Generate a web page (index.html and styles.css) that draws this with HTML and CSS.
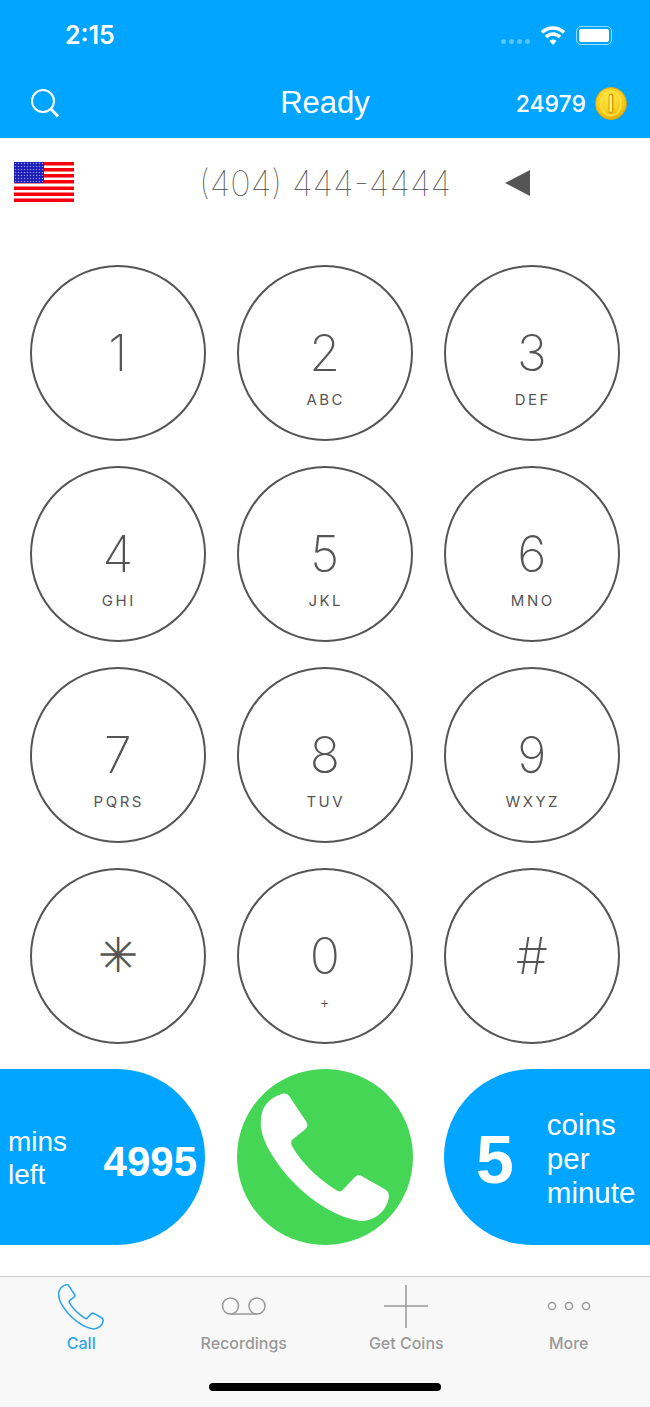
FILE: index.html
```html
<!DOCTYPE html>
<html lang="en">
<head>
    <meta charset="UTF-8">
    <meta name="viewport" content="width=device-width, initial-scale=1.0">
    <title>Dialer</title>
    <link rel="stylesheet" href="styles.css">
</head>
<body>
    <svg class="defs" width="0" height="0">
        <defs>
            <symbol id="handset" viewBox="26 24 138 138">
                <path d="M53 28.5C56 28 58 29 59.5 31.5L76.5 57C78 59.500 77.800 61.800 75.500 64L62.500 74.500C60.700 76.300 60.700 79 62.500 82C72 98 88 114 107 125.500C109.500 127 111.500 126.500 113 124.500L125 112C127 110 129.500 109.800 132 111.200L154.500 124C158.500 126.500 159.500 129 158.500 134C156 146 145 156 131 156C99 152 60 122 39 85C32 72 30 62 31 54C32 42 38 33 53 28.500Z"/>
            </symbol>
            <pattern id="stars" width="3" height="3" patternUnits="userSpaceOnUse">
                <circle cx="1.500" cy="1.500" r="0.800" fill="#8f8fe8"/>
            </pattern>
            <radialGradient id="gold" cx="45%" cy="35%" r="70%">
                <stop offset="0" stop-color="#ffe94a"/>
                <stop offset="0.7" stop-color="#f7c812"/>
                <stop offset="1" stop-color="#e0a308"/>
            </radialGradient>
        </defs>
    </svg>

    <header class="top">
        <div class="status-bar">
            <span class="time">2:15</span>
            <div class="status-icons">
                <span class="signal"><i></i><i></i><i></i><i></i></span>
                <svg class="wifi" width="26" height="21" viewBox="0 0 26 21">
                    <path d="M2 7.500C8 1.500 18 1.500 24 7.500" />
                    <path d="M6 12C10 8 16 8 20 12" />
                    <path d="M13 20L9.500 16C11.500 14 14.500 14 16.500 16Z" class="wifi-dot"/>
                </svg>
                <span class="battery"><span class="battery-fill"></span></span>
            </div>
        </div>
        <nav class="nav">
            <svg class="search" width="28" height="29" viewBox="0 0 28 29">
                <circle cx="12" cy="12" r="11"/>
                <path class="search-handle" d="M20 20L27 27.500"/>
            </svg>
            <span class="nav-title">Ready</span>
            <div class="coins">
                <span class="coins-count">24979</span>
                <svg class="coin" width="32" height="33" viewBox="0 0 32 33">
                    <ellipse cx="16" cy="16.500" rx="15.500" ry="16" fill="url(#gold)" stroke="#e2a90c"/>
                    <ellipse cx="16" cy="16.500" rx="10" ry="12" fill="none" stroke="#fbe14a" stroke-width="1.500"/>
                    <rect x="13.500" y="6.500" width="5" height="20" rx="2.500" fill="#d99d05"/>
                    <rect x="14.500" y="8" width="2.500" height="17" rx="1.200" fill="#fff07a"/>
                </svg>
            </div>
        </nav>
    </header>

    <section class="number-row">
        <svg class="flag" width="60" height="40" viewBox="0 0 60 40">
            <rect width="60" height="40" fill="#fff"/>
            <g fill="#f5000d">
                <rect y="0" width="60" height="3.500"/>
                <rect y="6" width="60" height="3.500"/>
                <rect y="12" width="60" height="3.500"/>
                <rect y="18" width="60" height="3.500"/>
                <rect y="24.500" width="60" height="3.500"/>
                <rect y="30.500" width="60" height="3.500"/>
                <rect y="36.500" width="60" height="3.500"/>
            </g>
            <rect width="30" height="21" fill="#1a1ab4"/>
            <rect width="30" height="21" fill="url(#stars)"/>
        </svg>
        <span class="number">(404) 444-4444</span>
        <span class="backspace"></span>
    </section>

    <section class="keypad">
        <button class="key"><span class="digit">1</span></button>
        <button class="key"><span class="digit">2</span><span class="letters">ABC</span></button>
        <button class="key"><span class="digit">3</span><span class="letters">DEF</span></button>
        <button class="key"><span class="digit">4</span><span class="letters">GHI</span></button>
        <button class="key"><span class="digit">5</span><span class="letters">JKL</span></button>
        <button class="key"><span class="digit">6</span><span class="letters">MNO</span></button>
        <button class="key"><span class="digit">7</span><span class="letters">PQRS</span></button>
        <button class="key"><span class="digit">8</span><span class="letters">TUV</span></button>
        <button class="key"><span class="digit">9</span><span class="letters">WXYZ</span></button>
        <button class="key"><span class="digit star">✳</span></button>
        <button class="key"><span class="digit">0</span><span class="letters plus">+</span></button>
        <button class="key"><span class="digit">#</span></button>
    </section>

    <section class="actions">
        <div class="pill pill-left">
            <span class="pill-label">mins<br>left</span>
            <span class="pill-mins">4995</span>
        </div>
        <button class="call-btn">
            <svg viewBox="7 4 176 176" width="176" height="176">
                <use href="#handset" x="26" y="24" width="138" height="138" class="handset-fill"/>
            </svg>
        </button>
        <div class="pill pill-right">
            <span class="pill-rate">5</span>
            <span class="pill-coins">coins<br>per<br>minute</span>
        </div>
    </section>

    <footer class="tabbar">
        <div class="tabs">
            <div class="tab tab-active">
                <svg class="tab-icon" width="46" height="46" viewBox="0 0 46 46">
                    <use href="#handset" x="-1" y="-1" width="48" height="48" class="handset-line"/>
                </svg>
                <span class="tab-label">Call</span>
            </div>
            <div class="tab">
                <svg class="tab-icon" width="46" height="46" viewBox="0 0 46 46">
                    <circle cx="9.500" cy="22" r="8"/>
                    <circle cx="36" cy="22" r="8"/>
                    <path d="M9.500 30H36"/>
                </svg>
                <span class="tab-label">Recordings</span>
            </div>
            <div class="tab">
                <svg class="tab-icon" width="46" height="46" viewBox="0 0 46 46">
                    <path d="M23 1V44M1 22H45"/>
                </svg>
                <span class="tab-label">Get Coins</span>
            </div>
            <div class="tab">
                <svg class="tab-icon" width="46" height="46" viewBox="0 0 46 46">
                    <circle cx="6" cy="22" r="3.600"/>
                    <circle cx="23" cy="22" r="3.600"/>
                    <circle cx="40" cy="22" r="3.600"/>
                </svg>
                <span class="tab-label">More</span>
            </div>
        </div>
        <div class="home-indicator"></div>
    </footer>
</body>
</html>
```

FILE: styles.css
```css
* {
    box-sizing: border-box;
}

body {
    margin: 0;
    font-family: "Liberation Sans", Arial, sans-serif;
    background: #fff;
    color: #555;
    overflow: hidden;
}

.defs {
    display: block;
    height: 0;
}

.top {
    height: 138px;
    background: #00a5ff;
    color: #fff;
}

.status-bar {
    height: 69px;
    display: flex;
    align-items: center;
    justify-content: space-between;
    padding: 1px 38px 0 65px;
}

.time {
    font-family: Inter, sans-serif;
    font-size: 25px;
    font-weight: 600;
}

.status-icons {
    display: flex;
    align-items: center;
    gap: 10px;
}

.signal {
    display: flex;
    gap: 3px;
    margin-top: 12px;
}

.signal i {
    width: 5px;
    height: 5px;
    border-radius: 50%;
    background: rgba(255, 255, 255, 0.35);
}

.wifi {
    fill: none;
    stroke: #fff;
    stroke-width: 3.500px;
}

.wifi-dot {
    fill: #fff;
    stroke: none;
}

.battery {
    width: 36px;
    height: 19px;
    padding: 2px;
    border: 1.500px solid rgba(255, 255, 255, 0.6);
    border-radius: 5px;
    display: block;
}

.battery-fill {
    display: block;
    height: 100%;
    background: #fff;
    border-radius: 2px;
}

.nav {
    height: 69px;
    display: grid;
    grid-template-columns: 1fr auto 1fr;
    align-items: center;
    padding: 0 23px 0 31px;
}

.search {
    fill: none;
    stroke: #fff;
    stroke-width: 2px;
}

.search-handle {
    stroke-width: 3px;
}

.nav-title {
    font-size: 31px;
    margin-left: -8px;
    margin-top: -2px;
}

.coins {
    display: flex;
    align-items: center;
    justify-content: flex-end;
    gap: 9px;
}

.coins-count {
    font-family: Inter, sans-serif;
    font-size: 23px;
    font-weight: 500;
}

.number-row {
    height: 90px;
    display: grid;
    grid-template-columns: 1fr auto 1fr;
    align-items: center;
    padding-left: 14px;
    padding-right: 14px;
}

.flag {
    display: block;
    margin-top: -2px;
}

.number {
    font-family: Inter, sans-serif;
    font-size: 34.600px;
    font-weight: 100;
    color: #444;
    opacity: 0.99;
}

.backspace {
    justify-self: start;
    margin-left: 54px;
    width: 0;
    height: 0;
    border-top: 13px solid transparent;
    border-bottom: 13px solid transparent;
    border-right: 25px solid #555;
}

.keypad {
    display: grid;
    grid-template-columns: repeat(3, 175px);
    column-gap: 32px;
    row-gap: 25px;
    padding: 37px 30px 0;
}

.key {
    width: 175.500px;
    height: 176px;
    border: 2.500px solid #555;
    border-radius: 50%;
    background: #fff;
    padding: 56px 0 0;
    display: flex;
    flex-direction: column;
    align-items: center;
    color: #555;
    font-family: Inter, sans-serif;
}

.digit {
    font-size: 50px;
    font-weight: 150;
    line-height: 60px;
}

.star {
    font-family: "DejaVu Sans", sans-serif;
    font-size: 48px;
    margin-top: -1px;
}

.letters {
    font-size: 15px;
    letter-spacing: 2.500px;
    line-height: 18px;
    margin-top: 8px;
    padding-left: 2px;
}

.plus {
    font-size: 15px;
    font-weight: 300;
    letter-spacing: 0;
    margin-top: 8px;
    padding-left: 0;
}

.actions {
    display: grid;
    grid-template-columns: 205px 175px 206px;
    column-gap: 32px;
    margin-top: 25px;
    height: 176px;
}

.pill {
    background: #00a5ff;
    color: #fff;
    display: flex;
    align-items: center;
}

.pill-left {
    border-radius: 0 88px 88px 0;
    justify-content: space-between;
    padding: 0 8px;
}

.pill-right {
    border-radius: 88px 0 0 88px;
    padding-left: 32px;
    gap: 33px;
}

.pill-label {
    font-size: 28px;
    line-height: 33px;
    margin-top: 2px;
}

.pill-mins {
    font-size: 42px;
    font-weight: 700;
    margin-top: 10px;
}

.pill-rate {
    font-size: 68px;
    font-weight: 700;
    margin-top: 3px;
}

.pill-coins {
    font-size: 29.500px;
    line-height: 34px;
    margin-top: 4px;
}

.call-btn {
    width: 175.500px;
    height: 176px;
    padding: 0;
    border: 0;
    border-radius: 50%;
    background: #45d655;
}

.call-btn svg {
    display: block;
}

.handset-fill {
    fill: #fff;
}

.tabbar {
    margin-top: 31px;
    height: 131px;
    background: #f8f8f8;
    border-top: 1px solid #ccc;
}

.tabs {
    display: grid;
    grid-template-columns: repeat(4, 1fr);
    padding-top: 7px;
}

.tab {
    display: flex;
    flex-direction: column;
    align-items: center;
    color: #999;
}

.tab-icon {
    display: block;
    fill: none;
    stroke: #999;
    stroke-width: 1.500px;
}

.tab-active {
    color: #2ea5e8;
}

.handset-line {
    fill: none;
    stroke: #2ea5e8;
    stroke-width: 4.500px;
}

.tab-label {
    font-family: Inter, sans-serif;
    font-size: 16px;
    font-weight: 450;
    line-height: 18px;
    margin-top: 4px;
}

.home-indicator {
    width: 232px;
    height: 8px;
    margin: 31px auto 0;
    background: #000;
    border-radius: 4px;
}
```
